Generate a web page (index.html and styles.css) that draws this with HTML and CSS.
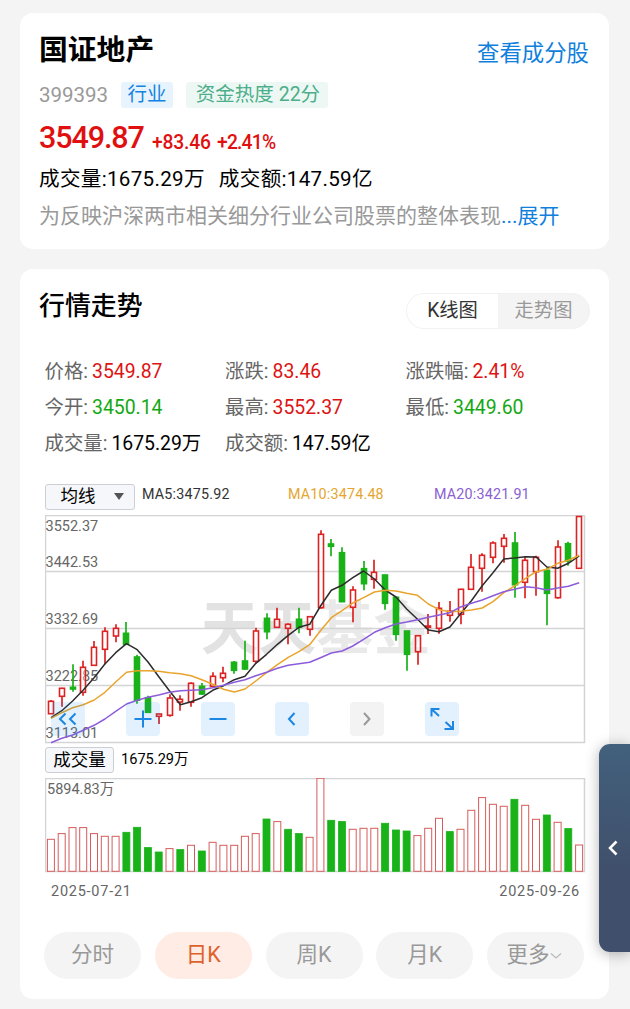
FILE: index.html
```
<!DOCTYPE html>
<html lang="zh-CN">
<head>
    <meta charset="UTF-8">
    <title>国证地产</title>
    <link rel="stylesheet" href="styles.css">
</head>
<body>
<div class="card info">
    <div class="info-head">
        <h1>国证地产</h1>
        <a class="link" href="#">查看成分股</a>
    </div>
    <div class="tags">
        <span class="code">399393</span>
        <span class="tag blue">行业</span>
        <span class="tag teal">资金热度 22分</span>
    </div>
    <div class="price">
        <b>3549.87</b>
        <span class="diff">+83.46</span>
        <span class="rate">+2.41%</span>
    </div>
    <div class="deal">
        <span>成交量:1675.29万</span>
        <span>成交额:147.59亿</span>
    </div>
    <p class="desc">为反映沪深两市相关细分行业公司股票的整体表现<a href="#">...展开</a></p>
</div>

<div class="card market">
    <div class="market-head">
        <h2>行情走势</h2>
        <div class="switch">
            <span class="selected">K线图</span>
            <span>走势图</span>
        </div>
    </div>

    <ul class="stats">
        <li>价格:<em class="red">3549.87</em></li>
        <li>涨跌:<em class="red">83.46</em></li>
        <li>涨跌幅:<em class="red">2.41%</em></li>
        <li>今开:<em class="green">3450.14</em></li>
        <li>最高:<em class="red">3552.37</em></li>
        <li>最低:<em class="green">3449.60</em></li>
        <li>成交量:<em>1675.29万</em></li>
        <li>成交额:<em>147.59亿</em></li>
    </ul>

    <div class="ma">
        <div class="select">均线<i></i></div>
        <span class="ma5">MA5:3475.92</span>
        <span class="ma10">MA10:3474.48</span>
        <span class="ma20">MA20:3421.91</span>
    </div>

    <div class="kline">
        <svg id="kline" width="541" height="229" viewBox="0 0 541 229">
            <text class="watermark" x="156" y="134">天天<tspan class="light">基金</tspan></text>
            <path class="grid" d="M0.5 0.5H539.5V227.5H0.5ZM0 56.5H540M0 113.5H540M0 170.5H540"/>
            <g class="axis">
                <text x="0.5" y="15.5">3552.37</text>
                <text x="0.5" y="52">3442.53</text>
                <text x="0.5" y="109">3332.69</text>
                <text x="0.5" y="166">3222.85</text>
                <text x="0.5" y="223">3113.01</text>
            </g>
        </svg>
        <div class="tools">
            <span><svg viewBox="0 0 34 34"><path d="M14.5 11.5L9 17L14.5 22.5M24.5 11.5L19 17L24.5 22.5"/></svg></span>
            <span><svg viewBox="0 0 34 34"><path d="M8.5 17H25.5M17 8.5V25.5"/></svg></span>
            <span><svg viewBox="0 0 34 34"><path d="M8.5 17H25.5"/></svg></span>
            <span><svg viewBox="0 0 34 34"><path d="M19.5 11L14 17L19.5 23"/></svg></span>
            <span class="disabled"><svg viewBox="0 0 34 34"><path d="M14 11L19.5 17L14 23"/></svg></span>
            <span><svg viewBox="0 0 34 34"><path d="M6.5 14.5V7H14.5M7 7.5L14 14M28 19V27H19.5M27.5 26.5L20.5 20"/></svg></span>
        </div>
    </div>

    <div class="volume-head">
        <div class="select">成交量</div>
        <span>1675.29万</span>
    </div>
    <div class="volume">
        <svg id="volume" width="541" height="95" viewBox="0 0 541 95">
            <path class="grid" d="M0.5 0.5H539.5V93.5H0.5Z"/>
            <text class="axis" x="2" y="16">5894.83万</text>
        </svg>
    </div>
    <div class="dates">
        <span>2025-07-21</span>
        <span>2025-09-26</span>
    </div>

    <div class="tabs">
        <span>分时</span>
        <span class="selected">日K</span>
        <span>周K</span>
        <span>月K</span>
        <span class="more">更多<svg width="12" height="8" viewBox="0 0 12 8"><path d="M1 1.5L6 6L11 1.5"/></svg></span>
    </div>
</div>

<div class="drawer">
    <svg width="12" height="18" viewBox="0 0 12 18"><path d="M9.5 2.5L3 9L9.5 15.5"/></svg>
</div>

<script>
    var NS = 'http://www.w3.org/2000/svg';
    var STEP = 10.78;

    // 最高, 实体上沿, 实体下沿, 最低, 是否上涨
    var candles = [
        [185,186.3,198.7,198.7,1],[172.7,173.3,181.3,191.7,1],[149.3,172.3,174,176.7,0],[145.7,152.3,177.3,180.7,1],
        [126,132.3,150.3,150.3,1],[112.3,116.3,134.3,149.3,1],[109.3,113.3,121,127.3,1],[107,118.3,129.3,129.3,0],
        [139.7,142,185.3,188.7,0],[180.7,182.7,197.3,198,0],[198.7,199,201.3,209,1],[179.3,183,200.3,201.7,1],
        [180.3,184.3,187,195.7,1],[167.3,168.3,187.3,191.7,1],[168,171.3,179,180,0],[157.3,161.3,171.3,172.3,1],
        [151.7,158.3,162.7,167.3,1],[146,147.3,155.3,158.7,0],[125.7,146,154,155,0],[112.7,116,146.3,148.3,1],
        [98.3,103.3,116.7,124.3,0],[92.7,104.3,112.3,113,1],[108.3,109.3,113.3,129.3,1],[92.7,104.3,112.3,118.3,0],
        [101.3,101.7,114.3,120.7,1],[15.3,19.3,92.7,93.7,1],[24,29,31.3,41.3,0],[32.3,37.7,86.7,86.7,0],
        [71.3,75,92.3,107.3,1],[46,53.7,68.7,75.3,0],[44.7,57.3,64.3,73.7,1],[60,60,88.3,94.7,0],
        [81.7,82.3,119.3,125.7,0],[116,116,139.3,155.7,0],[120,120.7,136.7,149.7,1],[99,111,112.3,119,1],
        [87,93.3,113.3,118.7,1],[86,96.3,100.3,106.7,1],[73.7,74.3,99.3,109.3,1],[39,52.3,74.3,75,1],
        [38.3,40.3,53.3,76.7,1],[26.3,28,42.3,48.3,1],[19,23.3,31.3,47.7,1],[17,28,69.7,82.7,0],
        [42.3,45.3,67.3,83.3,1],[40.7,42.3,56.7,80.7,1],[52.7,55.3,78.3,110.3,0],[25.3,32,82.7,83.7,1],
        [26.7,28.7,46,50.7,0],[1,1.5,53.3,53.7,1]
    ];
    var ma5 = [202.7,195.7,186,175,162.7,149,137.7,128.7,134.7,147,161.7,176,189.7,186.7,182.7,175.3,170.7,164.7,161.3,148.3,139.3,129.3,120.3,112.3,109.3,91,75.3,70.3,62.7,56,64,75,82,94,104.3,115,116.7,112,98.7,85.7,70.7,57.7,44,43,41.7,42,52,53.3,48.3,41];
    var ma10 = [203.3,197.7,192.7,189.7,185,177.3,167,157.3,155.7,155.7,156.3,157.7,158.7,160.7,164.7,169.3,174.3,177,174,166,157.7,149.7,142.3,136.7,129.7,115.7,102.7,95.7,88,82.7,77,75.3,76,78.3,80.3,89,94.7,96.7,96.3,95,93,86.7,77.7,71,63.7,56.7,54.3,48.3,45.3,40.3];
    var ma20 = [227.7,223.3,220,215.3,210.3,204,196.3,189,185.3,182.3,180,177.3,175.7,175.3,174.7,172.7,170.3,167.3,164.7,160.7,157.3,153.3,150.3,148.7,147.3,142.7,138,136,131,124.3,117.3,112.7,109,107,104.7,102.3,100,97.7,92,88.3,85,80.7,76.7,74.3,71.7,72.7,75,73,71.3,67.7];
    // 负数为下跌
    var volumes = [32,37.7,43.7,43.7,37.7,35,35,-39,-44,-23.7,-19.3,22.7,-21.7,26,-20.3,29,26,26,35,37.7,-52.3,49.7,-42,-37.7,34,93,-51,-49.7,42,43,43,-48,-41.3,-40.3,35.7,43,53,-39.7,42,61,73.7,67,65,-72,66,52,-56.3,49,-42.7,26.3];

    function add(svg, name, attrs) {
        var el = document.createElementNS(NS, name);
        for (var k in attrs) {
            el.setAttribute(k, attrs[k]);
        }
        svg.appendChild(el);
    }

    function centerX(i) {
        return 6 + i * STEP;
    }

    function drawLine(svg, list, cls) {
        var points = list.map(function (y, i) {
            return centerX(i).toFixed(1) + ',' + y;
        });
        add(svg, 'polyline', {points: points.join(' '), 'class': cls});
    }

    var kline = document.getElementById('kline');
    candles.forEach(function (c, i) {
        var x = Math.round(centerX(i));
        var up = c[4];
        add(kline, 'path', {
            d: 'M' + x + ' ' + c[0] + 'V' + c[1] + 'M' + x + ' ' + c[2] + 'V' + c[3],
            'class': up ? 'wick up' : 'wick down'
        });
        add(kline, 'rect', {
            x: x - 2.5, y: c[1], width: 5, height: Math.max(c[2] - c[1], 1),
            'class': up ? 'body up' : 'body down'
        });
    });
    drawLine(kline, ma5, 'line5');
    drawLine(kline, ma10, 'line10');
    drawLine(kline, ma20, 'line20');

    var volume = document.getElementById('volume');
    volumes.forEach(function (v, i) {
        var h = Math.abs(v);
        add(volume, 'rect', {
            x: (centerX(i) - 3.6).toFixed(1), y: 93.3 - h, width: 7, height: h,
            'class': v > 0 ? 'vol up' : 'vol down'
        });
    });
</script>
</body>
</html>
```
FILE: styles.css
```
*{
    margin: 0;
    padding: 0;
    box-sizing: border-box;
}
body{
    height: 1009px;
    padding: 13px 21px 0 20px;
    background-color: #f4f4f4;
    font-family: Roboto, "Noto Sans CJK SC", sans-serif;
    color: #000;
    position: relative;
    overflow: hidden;
    white-space: nowrap;
}
ul{
    list-style: none;
}
a{
    color: #1080dc;
    text-decoration: none;
}
em,i{
    font-style: normal;
}
.card{
    background-color: #fff;
    border-radius: 13px;
}

/* 指数信息 */
.info{
    height: 236px;
    padding: 17px 20px 0 19px;
}
.info-head{
    display: flex;
    justify-content: space-between;
    height: 44px;
}
.info-head h1{
    font-size: 28.8px;
    line-height: 40px;
}
.link{
    font-size: 22.4px;
    line-height: 46px;
}
.tags{
    display: flex;
    align-items: center;
    height: 41px;
}
.code{
    width: 82px;
    padding-top: 1px;
    font-size: 20.5px;
    color: #999;
}
.tag{
    height: 26px;
    line-height: 26px;
    border-radius: 3px;
    font-size: 19.5px;
    text-align: center;
}
.tag.blue{
    width: 52px;
    margin-right: 13px;
    background-color: #e7f4fe;
    color: #1583e0;
}
.tag.teal{
    width: 142px;
    padding-left: 2px;
    background-color: #edf8f4;
    color: #4cae8a;
}
.price{
    display: flex;
    align-items: baseline;
    height: 46px;
    line-height: 46px;
    color: #e01010;
}
.price b{
    width: 113px;
    font-size: 30.5px;
    font-weight: 500;
    letter-spacing: -1.1px;
}
.price span{
    position: relative;
    top: 1px;
    font-size: 19.3px;
    font-weight: 500;
    letter-spacing: -0.2px;
}
.price .diff{
    width: 65px;
}
.price .rate{
    letter-spacing: -0.8px;
}
.deal{
    display: flex;
    gap: 14px;
    height: 36px;
    line-height: 36px;
    font-size: 20.6px;
    letter-spacing: 0.3px;
}
.desc{
    font-size: 21px;
    line-height: 38px;
    color: #999;
}

/* 行情走势 */
.market{
    height: 730px;
    margin-top: 20px;
    padding: 24px 19px 0 20px;
}
.market-head{
    display: flex;
    justify-content: space-between;
    height: 61px;
}
.market-head h2{
    margin-left: -1px;
    font-size: 25.9px;
    font-weight: 500;
    line-height: 26px;
}
.switch{
    display: flex;
    width: 184px;
    height: 36px;
    border: 1px solid #f2f2f2;
    border-radius: 18px;
    background-color: #f4f4f4;
    overflow: hidden;
}
.switch span{
    flex: 1;
    line-height: 34px;
    text-align: center;
    font-size: 19.3px;
    color: #999;
}
.switch .selected{
    background-color: #fff;
    color: #333;
}
.stats{
    display: grid;
    grid-template-columns: 180.5px 180.5px 160px;
    grid-auto-rows: 36px;
    height: 130px;
    padding-left: 4.5px;
    line-height: 35px;
    font-size: 19.4px;
    color: #666;
}
.stats em{
    margin-left: 4px;
    color: #000;
}
.stats .red{
    color: #dc1414;
}
.stats .green{
    color: #14a814;
}
.ma{
    display: flex;
    height: 31px;
    padding-left: 5px;
    font-size: 14.3px;
    line-height: 20px;
    letter-spacing: 0.2px;
}
.select{
    display: flex;
    align-items: center;
    justify-content: center;
    height: 26px;
    border: 1px solid #ccd0d4;
    border-radius: 3px;
    background-color: #f5f7fa;
    font-size: 17.5px;
    line-height: 24px;
    letter-spacing: 0;
}
.ma .select{
    width: 90px;
    gap: 18px;
    padding: 0 0 2px 4px;
}
.select i{
    border: 5px solid transparent;
    border-top: 7px solid #555;
    border-bottom: 0;
}
.ma5{
    width: 146px;
    margin-left: 7px;
    color: #333;
}
.ma10{
    width: 146px;
    color: #e5a630;
}
.ma20{
    color: #8a60d2;
}
.kline{
    position: relative;
    height: 232px;
    margin-left: 5px;
}
.kline svg,.volume svg{
    display: block;
}
.grid{
    fill: none;
    stroke: #d2d4d6;
    stroke-width: 1.5;
}
.axis{
    font-size: 14.5px;
    fill: #666;
}
.watermark{
    font-size: 57.5px;
    font-weight: 700;
    fill: #e2e2e2;
}
.watermark .light{
    fill: #e9e9e9;
}
.wick{
    stroke-width: 1.7;
}
.body{
    stroke-width: 1.6;
}
.wick.up,.body.up{
    stroke: #dc2323;
    fill: none;
}
.body.up{
    fill: #fff;
    fill-opacity: 0.4;
}
.wick.down,.body.down{
    stroke: #19b219;
    fill: #19b219;
}
.line5,.line10,.line20{
    fill: none;
    stroke-width: 1.5;
    stroke-linejoin: round;
}
.line5{
    stroke: #2c2c2c;
}
.line10{
    stroke: #e8a42c;
}
.line20{
    stroke: #8c5cdb;
}
/* 浮在K线图上的按钮 */
.tools{
    position: absolute;
    left: 6px;
    bottom: 11px;
    display: flex;
    gap: 40.8px;
}
.tools span{
    width: 34px;
    height: 34px;
    border-radius: 4px;
    background-color: rgba(20, 140, 240, 0.12);
}
.tools path{
    fill: none;
    stroke: #1c86e4;
    stroke-width: 2;
}
.tools .disabled{
    background-color: #f3f3f3;
}
.tools .disabled path{
    stroke: #999;
}
.volume-head{
    display: flex;
    height: 31px;
    padding-left: 5px;
    font-size: 14.6px;
    line-height: 24px;
}
.volume-head .select{
    width: 69px;
    margin-right: 7px;
    padding-bottom: 1px;
}
.volume{
    height: 101px;
    margin-left: 5px;
}
.vol.up{
    fill: #fff;
    stroke: #d65c5c;
    stroke-width: 1;
}
.vol.down{
    fill: #19b219;
    stroke: #19b219;
    stroke-width: 0.8;
}
.dates{
    display: flex;
    justify-content: space-between;
    height: 53px;
    padding: 0 10px 0 11px;
    font-size: 14.5px;
    line-height: 25px;
    letter-spacing: 0.75px;
    color: #666;
}
.tabs{
    display: flex;
    justify-content: space-between;
    padding: 0 6px 0 4px;
}
.tabs span{
    width: 97px;
    height: 47px;
    line-height: 46px;
    border-radius: 24px;
    background-color: #f4f4f4;
    text-align: center;
    font-size: 21.5px;
    color: #999;
}
.tabs .selected{
    background-color: #ffece5;
    color: #e0602c;
}
.tabs .more{
    padding-right: 3px;
}
.tabs svg{
    margin-bottom: 2px;
}
.tabs path{
    fill: none;
    stroke: #bbb;
    stroke-width: 1.3;
}

/* 右侧抽屉 */
.drawer{
    position: absolute;
    right: 0;
    top: 744px;
    display: flex;
    align-items: center;
    width: 31.5px;
    height: 207.5px;
    padding-left: 8px;
    border-radius: 11px 0 0 11px;
    background-image: linear-gradient(#42607c, #40506c 60%);
    box-shadow: 0 2px 14px rgba(0, 0, 0, 0.3);
}
.drawer path{
    fill: none;
    stroke: #fff;
    stroke-width: 2.5;
}
```
